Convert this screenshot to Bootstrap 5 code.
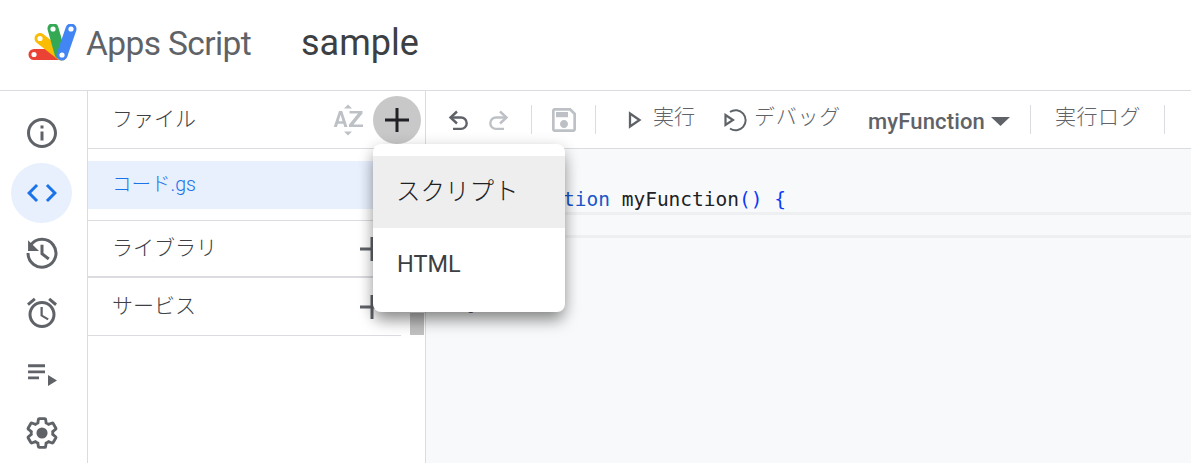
<!DOCTYPE html>
<html lang="ja">
<head>
<meta charset="utf-8">
<title>Apps Script</title>
<link rel="stylesheet" href="https://cdn.jsdelivr.net/npm/bootstrap@5.3.0/dist/css/bootstrap.min.css">
<script src="https://cdn.jsdelivr.net/npm/bootstrap@5.3.0/dist/js/bootstrap.bundle.min.js"></script>
<style>
html,body{height:463px;overflow:hidden;background:#fff}
body{font-family:Roboto,"Noto Sans CJK JP",sans-serif;color:#3c4043}
.as-head{height:91px;border-bottom:1px solid #dadce0;padding-left:28px;padding-bottom:3px}
.as-brand{font-size:33.500px;color:#5f6368;letter-spacing:-.6px;margin-left:8px;width:215px;line-height:1}
.as-proj{font-size:36px;color:#3c4043;line-height:1;padding-bottom:2px}
.as-main{height:372px}
.as-rail{width:88px;border-right:1px solid #dadce0;padding-top:12px;flex:none}
.as-railbtn{width:61px;height:60px;border-radius:50%;margin-left:11px}
.as-railbtn.is-on{background:#e8f0fe}
.as-files{width:338px;flex:none;border-right:1px solid #dadce0;position:relative}
.as-fhead{height:58px;border-bottom:1px solid #dadce0;padding-left:24px;padding-right:4px;font-size:21px;font-weight:300}
.as-az{margin-right:1px}
.as-roundbtn{width:48px;height:48px;border-radius:50%;background:#c8c8c8}
.as-fileitem{margin-top:12px;height:48px;background:#e8f0fe;color:#1a73e8;font-size:19.500px;padding-left:24px;font-weight:300}
.as-sect{height:58px;border-bottom:1px solid #dadce0;padding-left:24px;padding-right:11px;font-size:21px;font-weight:300;margin-right:24px}
.as-sect.is-first{border-top:1px solid #dadce0;margin-top:11px;margin-right:0;padding-right:35px}
.as-sect.is-mid{border-bottom-width:2px}
.as-scroll{position:absolute;left:322px;top:222px;width:14px;height:22px;background:#c1c1c1}
.as-editor{flex:1;min-width:0}
.as-tools{height:58px;border-bottom:1px solid #dadce0;padding-left:20px;color:#5f6368;font-size:21px;font-weight:300}
.as-sep{width:1px;height:29px;background:#dadce0;flex:none}
.as-fn{font-size:22px;font-weight:500;color:#5f6368;letter-spacing:.15px;padding-top:3px}
.as-t0{flex:none}
.as-redo{margin-left:17px}
.as-s1{margin-left:20px}
.as-save{margin-left:16px}
.as-s2{margin-left:15px}
.as-run{margin-left:32px}
.as-runl{margin-left:11px;padding-bottom:3px}
.as-dbg{margin-left:28px}
.as-dbgl{margin-left:7px;letter-spacing:.75px;padding-bottom:3px}
.as-fnm{margin-left:27px}
.as-car{margin-left:6px;margin-top:3px}
.as-s3{margin-left:20px}
.as-log{margin-left:24px;letter-spacing:.5px;padding-bottom:3px}
.as-s4{margin-left:23px}
.as-code{height:314px;background:#f8f9fa;padding-top:39px;position:relative}
.as-line{font-family:"DejaVu Sans Mono",monospace;font-size:19.500px;line-height:24px;padding-left:90px;color:#202124;white-space:pre}
.as-kw{color:#1a56c9}
.as-br{color:#0a3cf5}
.as-cur{height:26px;border-top:3px solid #eeeff1;border-bottom:3px solid #eeeff1}
.as-g{position:absolute;left:41px;top:148px;font-size:14px;color:#5f6368;line-height:16px}
.as-menu{position:absolute;left:373px;top:144px;width:192px;height:168px;background:#fff;border-radius:8px;box-shadow:0 10px 16px -2px rgba(0,0,0,.4),0 2px 16px rgba(0,0,0,.14);padding-top:12px;z-index:5}
.as-mi{height:72px;padding-left:23px;font-size:24.500px;font-weight:300;color:#202124}
.as-mi.is-on{background:#eee}
.as-mi.is-html{font-size:23.500px;font-weight:400;color:#3c4043;padding-top:2px;padding-left:24px}
</style>
</head>
<body class="position-relative">
<header class="as-head d-flex align-items-center">
  <svg width="50" height="40" viewBox="0 0 50 40" aria-hidden="true" class="flex-none">
    <g stroke-linecap="round" fill="none" stroke-width="11">
      <path d="M6 30.500H34" stroke="#ea4335"/>
      <path d="M12 14.500L33 31" stroke="#fbbc04"/>
      <path d="M25 4.500 32 29.500" stroke="#34a853"/>
      <path d="M43 5 34 31" stroke="#4285f4"/>
    </g>
    <g fill="#fff"><circle cx="6" cy="30.500" r="2.600"/><circle cx="12" cy="14.500" r="2.600"/><circle cx="25" cy="5" r="2.600"/><circle cx="43" cy="5" r="2.600"/><circle cx="34" cy="31" r="2.600"/></g>
  </svg>
  <div class="as-brand">Apps Script</div>
  <div class="as-proj">sample</div>
</header>
<main class="as-main d-flex">
  <nav class="as-rail">
    <div class="as-railbtn d-flex align-items-center justify-content-center"><svg width="36" height="36" viewBox="0 0 24 24" fill="#5f6368"><path d="M11 7h2v2h-2zm0 4h2v6h-2zm1-9C6.480 2 2 6.480 2 12s4.480 10 10 10 10-4.480 10-10S17.520 2 12 2zm0 18c-4.410 0-8-3.590-8-8s3.590-8 8-8 8 3.590 8 8-3.590 8-8 8z"/></svg></div>
    <div class="as-railbtn is-on d-flex align-items-center justify-content-center"><svg width="36" height="36" viewBox="0 0 24 24" fill="#1a73e8"><path d="M9.400 16.600 4.800 12l4.600-4.600L8 6l-6 6 6 6 1.400-1.400zm5.200 0 4.600-4.600-4.600-4.600L16 6l6 6-6 6-1.400-1.400z"/></svg></div>
    <div class="as-railbtn d-flex align-items-center justify-content-center"><svg width="36" height="36" viewBox="0 0 24 24" fill="none" stroke="#5f6368" stroke-width="2"><path d="M4.400 6.800A9.300 9.300 0 1 1 2.700 12"/><path d="M12 6.500V12.500l4.500 3.500"/><path d="M2.700 3.500V10.700H10Z" fill="#5f6368" stroke="none"/></svg></div>
    <div class="as-railbtn d-flex align-items-center justify-content-center"><svg width="36" height="36" viewBox="0 0 24 24" fill="#5f6368"><path d="m22 5.720-4.600-3.860-1.290 1.530 4.600 3.860L22 5.720zM7.880 3.390 6.600 1.860 2 5.710l1.290 1.530 4.590-3.850zM12.500 8H11v6l4.750 2.850.75-1.230-4-2.370V8zM12 4a9 9 0 1 0 .001 18.001A9 9 0 0 0 12 4zm0 16c-3.870 0-7-3.130-7-7s3.130-7 7-7 7 3.130 7 7-3.130 7-7 7z"/></svg></div>
    <div class="as-railbtn d-flex align-items-center justify-content-center"><svg width="36" height="36" viewBox="0 0 24 24" fill="#5f6368"><path d="M2.700 6.200H14v2H2.700zM2.700 10.400H14v1.800H2.700zM2.700 14.400H10v1.800H2.700zM16 13.300l6 3.700-6 3.700z"/></svg></div>
    <div class="as-railbtn d-flex align-items-center justify-content-center"><svg width="36" height="36" viewBox="0 0 24 24"><path fill="none" stroke="#5f6368" stroke-width="1.900" d="M19.140 12.940c.04-.3.060-.61.060-.94 0-.32-.02-.64-.07-.94l2.030-1.580c.18-.14.230-.41.120-.61l-1.920-3.320c-.12-.22-.37-.29-.59-.22l-2.390.96c-.5-.38-1.030-.7-1.620-.94l-.36-2.540c-.04-.24-.24-.41-.48-.41h-3.840c-.24 0-.43.170-.47.410l-.36 2.540c-.59.240-1.130.570-1.620.940l-2.390-.96c-.22-.08-.47 0-.59.220L2.740 8.870c-.12.210-.08.470.12.610l2.030 1.580c-.05.300-.09.630-.09.940s.02.640.07.940l-2.030 1.580c-.18.140-.23.410-.12.610l1.920 3.320c.12.220.37.290.59.220l2.390-.96c.5.380 1.030.7 1.620.94l.36 2.540c.05.240.24.410.48.410h3.840c.24 0 .44-.17.47-.41l.36-2.540c.59-.24 1.130-.56 1.620-.94l2.390.96c.22.080.47 0 .59-.22l1.920-3.320c.12-.22.070-.47-.12-.61l-2.010-1.580z"/><circle cx="12" cy="12" r="3.700" fill="#5f6368"/></svg></div>
  </nav>
  <section class="as-files">
    <div class="as-fhead d-flex align-items-center justify-content-between">
      <span>ファイル</span>
      <div class="d-flex align-items-center gap-2">
        <svg class="as-az" width="32" height="32" viewBox="0 0 32 32" fill="#bdc1c6"><path d="M16 .500l4 4h-8zM16 31.500l-4-4h8z"/><path d="M7 7h3.200l5.300 16h-3.200l-1-3.200H5.900L4.900 23H1.700zM8.600 10.800l-1.900 6.400h3.800zM17.500 7h13v2.500L21.500 20.500H31V23H17v-2.500L26 9.500h-8.500z"/></svg>
        <div class="as-roundbtn d-flex align-items-center justify-content-center"><svg width="36" height="36" viewBox="0 0 24 24" fill="#202124"><path d="M20 13h-7v7h-2v-7H4v-2h7V4h2v7h7z"/></svg></div>
      </div>
    </div>
    <div class="as-fileitem d-flex align-items-center">コード.gs</div>
    <div class="as-sect is-first is-mid d-flex align-items-center justify-content-between"><span>ライブラリ</span><svg width="36" height="36" viewBox="0 0 24 24" fill="#5f6368"><path d="M20 13h-7v7h-2v-7H4v-2h7V4h2v7h7z"/></svg></div>
    <div class="as-sect d-flex align-items-center justify-content-between"><span>サービス</span><svg width="36" height="36" viewBox="0 0 24 24" fill="#5f6368"><path d="M20 13h-7v7h-2v-7H4v-2h7V4h2v7h7z"/></svg></div>
    <div class="as-scroll"></div>
  </section>
  <section class="as-editor">
    <div class="as-tools d-flex align-items-center">
      <svg class="as-t0" width="24" height="24" viewBox="0 0 24 24" fill="none" stroke="#5f6368" stroke-width="2.400"><path d="M11 3.500 4.500 9.500 11 15.500"/><path d="M5 9.500H15a5.700 5.700 0 0 1 0 11.400H7"/></svg>
      <svg class="as-t0 as-redo" width="24" height="24" viewBox="0 0 24 24" fill="none" stroke="#bdc1c6" stroke-width="2.400"><path d="M13 3.500 19.500 9.500 13 15.500"/><path d="M19 9.500H9a5.700 5.700 0 0 0 0 11.400H17"/></svg>
      <div class="as-sep as-s1"></div>
      <svg class="as-t0 as-save" width="32" height="32" viewBox="0 0 24 24" fill="#bdc1c6"><path d="M17 3H5c-1.110 0-2 .9-2 2v14c0 1.100.89 2 2 2h14c1.100 0 2-.9 2-2V7l-4-4zm2 16H5V5h11.170L19 7.830V19zm-7-7c-1.660 0-3 1.340-3 3s1.340 3 3 3 3-1.340 3-3-1.340-3-3-3zM6 6h9v4H6z"/></svg>
      <div class="as-sep as-s2"></div>
      <svg class="as-t0 as-run" width="14" height="18" viewBox="0 0 14 18" fill="none" stroke="#5f6368" stroke-width="2.300"><path d="M2 2.500 11.500 9 2 15.500Z"/></svg>
      <span class="as-runl">実行</span>
      <svg class="as-t0 as-dbg" width="24" height="24" viewBox="0 0 24 24" fill="none" stroke="#5f6368" stroke-width="2"><path d="M2.500 7 10 12 2.500 17Z" stroke-width="2.200"/><path d="M7 4a10 10 0 1 1 0 16.500"/></svg>
      <span class="as-dbgl">デバッグ</span>
      <span class="as-fn as-fnm">myFunction</span>
      <svg class="as-t0 as-car" width="19" height="9" viewBox="0 0 19 9" fill="#5f6368"><path d="M0 0h19L9.500 9z"/></svg>
      <div class="as-sep as-s3"></div>
      <span class="as-log">実行ログ</span>
      <div class="as-sep as-s4"></div>
    </div>
    <div class="as-code">
      <div class="as-line"><span class="as-kw">function</span> myFunction<span class="as-br">() {</span></div>
      <div class="as-cur"></div>
      <span class="as-g">g</span>
    </div>
  </section>
</main>
<div class="as-menu">
  <div class="as-mi is-on d-flex align-items-center">スクリプト</div>
  <div class="as-mi is-html d-flex align-items-center">HTML</div>
</div>
</body>
</html>
